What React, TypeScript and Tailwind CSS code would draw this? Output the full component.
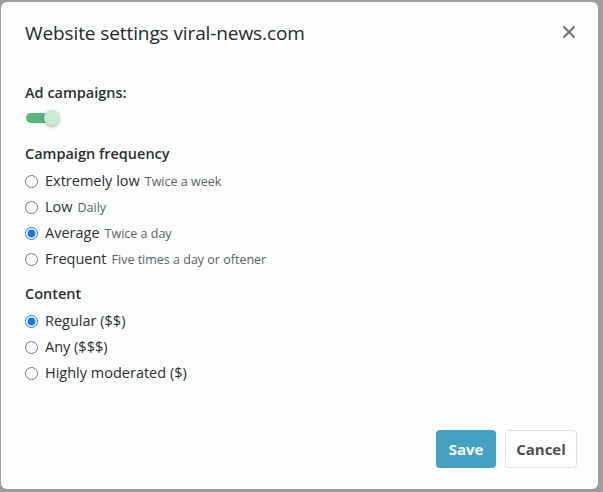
import React from 'react';

const frequencies = [
  { label: 'Extremely low', hint: 'Twice a week' },
  { label: 'Low', hint: 'Daily' },
  { label: 'Average', hint: 'Twice a day' },
  { label: 'Frequent', hint: 'Five times a day or oftener' },
];

const contents = ['Regular ($$)', 'Any ($$$)', 'Highly moderated ($)'];

const RadioRow: React.FC<{ name: string; label: string; hint?: string; checked?: boolean }> = ({ name, label, hint, checked }) => (
  <label className="flex items-center h-[26px]">
    <input type="radio" name={name} defaultChecked={checked} className="m-0 w-[13px] h-[13px] accent-[#1f75f4]" />
    <span className="ml-[7px] flex items-baseline">
      <span className="text-[14.5px] text-[#2b2f33]">{label}</span>
      {hint && <span className="ml-[5px] text-[12.5px] text-[#5b6166]">{hint}</span>}
    </span>
  </label>
);

const App: React.FC = () => {
  return (
    <div className="w-[603px] h-[492px] bg-[#9c9e9e] pt-[2px] pl-[1px] pr-[5px] pb-[3px]" style={{ fontFamily: '"Open Sans", "Noto Sans", sans-serif' }}>
      <div className="h-full bg-[#fcfdfd] rounded-[6px] flex flex-col">
        <div className="flex items-center justify-between pl-[24px] pr-[22px] pt-[2px] h-[60px]">
          <h1 className="text-[19px] text-[#26292c] tracking-[-0.1px]">Website settings viral-news.com</h1>
          <svg width="14" height="14" viewBox="0 0 14 14" className="mb-[2px]">
            <path d="M2 2 L12 12 M12 2 L2 12" stroke="#6f7377" strokeWidth="2" strokeLinecap="round" />
          </svg>
        </div>

        <div className="pl-[24px] pt-[21px] flex-1">
          <div className="text-[14.5px] font-semibold text-[#2b2f33] leading-[20px]">Ad campaigns:</div>
          <div className="relative mt-[7px] w-[36px] h-[16px]">
            <div className="absolute left-[1px] top-[3px] w-[28px] h-[10px] rounded-full bg-[#58b879]" />
            <div className="absolute left-[19px] top-0 w-[16px] h-[16px] rounded-full bg-[#c9ebd2] shadow-[0_1px_3px_rgba(0,0,0,0.3)]" />
          </div>

          <div className="mt-[18px] text-[14.5px] font-semibold text-[#2b2f33] leading-[20px]">Campaign frequency</div>
          <div className="mt-[4px] flex flex-col">
            {frequencies.map((f, i) => (
              <RadioRow key={f.label} name="freq" label={f.label} hint={f.hint} checked={i === 2} />
            ))}
          </div>

          <div className="mt-[12px] text-[14.5px] font-semibold text-[#2b2f33] leading-[20px]">Content</div>
          <div className="mt-[4px] flex flex-col">
            {contents.map((c, i) => (
              <RadioRow key={c} name="content" label={c} checked={i === 0} />
            ))}
          </div>
        </div>

        <div className="flex justify-end gap-[9px] pr-[21px] pb-[21px]">
          <button className="w-[60px] h-[38px] rounded-[4px] bg-[#45a1c4] text-white text-[15px] font-bold">Save</button>
          <button className="w-[72px] h-[38px] rounded-[4px] border border-[#dde2e4] bg-white text-[#4a5156] text-[15px] font-bold">Cancel</button>
        </div>
      </div>
    </div>
  );
};

export default App;
